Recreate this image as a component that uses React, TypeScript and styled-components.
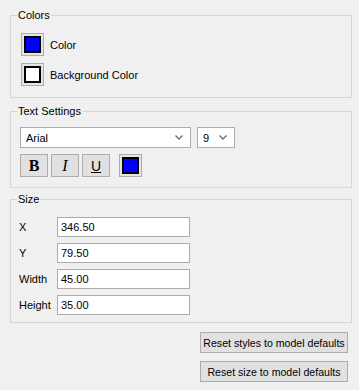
import { createGlobalStyle, styled } from "styled-components";

const GlobalStyle = createGlobalStyle`
  body {
    margin: 0;
    background: #f0f0f0;
    font-family: "Liberation Sans", Arial, sans-serif;
    font-size: 11px;
    color: #000;
  }
`;

const Chevron = () => (
  <svg width="8" height="5" viewBox="0 0 8 5">
    <path d="M0.5 0.5 L4 4 L7.5 0.5" fill="none" stroke="#6d6d6d" strokeWidth="1.4" />
  </svg>
);

const sizeFields = [
  ["X", "346.50"],
  ["Y", "79.50"],
  ["Width", "45.00"],
  ["Height", "35.00"],
];

const App = () => {
  return (
    <>
      <GlobalStyle />
      <Page>
        <Group $top={0}>
          <Legend>Colors</Legend>
          <ColorsBody>
            <SwatchRow>
              <Swatch $fill="#0000ff" />
              <span>Color</span>
            </SwatchRow>
            <SwatchRow>
              <Swatch $fill="#ffffff" />
              <span>Background Color</span>
            </SwatchRow>
          </ColorsBody>
        </Group>

        <Group $top={6}>
          <Legend>Text Settings</Legend>
          <TextBody>
            <SelectRow>
              <SelectBox $width={171}>
                <span>Arial</span>
                <Chevron />
              </SelectBox>
              <SelectBox $width={38}>
                <span>9</span>
                <Chevron />
              </SelectBox>
            </SelectRow>
            <StyleRow>
              <StyleButton $kind="bold">B</StyleButton>
              <StyleButton $kind="italic">I</StyleButton>
              <StyleButton $kind="underline">U</StyleButton>
              <TextSwatch $fill="#0000ff" />
            </StyleRow>
          </TextBody>
        </Group>

        <Group $top={4}>
          <Legend>Size</Legend>
          <SizeBody>
            {sizeFields.map(([label, value]) => (
              <FieldRow key={label}>
                <FieldLabel>{label}</FieldLabel>
                <Field>{value}</Field>
              </FieldRow>
            ))}
          </SizeBody>
        </Group>

        <Footer>
          <ResetButton>Reset styles to model defaults</ResetButton>
          <ResetButton>Reset size to model defaults</ResetButton>
        </Footer>
      </Page>
    </>
  );
};
export default App;

const Page = styled.div`
  width: 359px;
  box-sizing: border-box;
  padding: 8px 7px 0 10px;
  display: flex;
  flex-direction: column;
`;

const Group = styled.fieldset<{ $top: number }>`
  margin: ${(p) => p.$top}px 0 0 0;
  padding: 0;
  min-width: 0;
  border: 1px solid #d5d5d5;
`;

const Legend = styled.legend`
  margin-left: 6px;
  padding: 0 1px;
  line-height: 14px;
  font-size: 11px;
`;

const ColorsBody = styled.div`
  display: flex;
  flex-direction: column;
  gap: 7px;
  padding: 11px 10px 11px 10px;
`;

const SwatchRow = styled.div`
  display: flex;
  align-items: center;
  gap: 6px;
`;

const Swatch = styled.div<{ $fill: string }>`
  width: 23px;
  height: 23px;
  box-sizing: border-box;
  border: 1px solid #adadad;
  background: #e5e5e5;
  padding: 2px;
  flex-shrink: 0;

  &::after {
    content: "";
    display: block;
    width: 100%;
    height: 100%;
    box-sizing: border-box;
    border: 2px solid #000;
    background: ${(p) => p.$fill};
  }
`;

const TextSwatch = styled(Swatch)`
  margin-left: 6px;
`;

const TextBody = styled.div`
  display: flex;
  flex-direction: column;
  gap: 6px;
  padding: 9px 9px 10px 9px;
`;

const SelectRow = styled.div`
  display: flex;
  gap: 6px;
`;

const SelectBox = styled.div<{ $width: number }>`
  width: ${(p) => p.$width}px;
  height: 21px;
  box-sizing: border-box;
  border: 1px solid #acacac;
  background: #fff;
  display: flex;
  align-items: center;
  justify-content: space-between;
  padding: 0 7px 0 5px;
`;

const StyleRow = styled.div`
  display: flex;
  gap: 3px;
`;

const StyleButton = styled.div<{ $kind: "bold" | "italic" | "underline" }>`
  width: 28px;
  height: 23px;
  box-sizing: border-box;
  border: 1px solid #adadad;
  background: #e1e1e1;
  display: flex;
  align-items: center;
  justify-content: center;
  font-family: ${(p) =>
    p.$kind === "underline" ? '"Liberation Sans", Arial, sans-serif' : '"Liberation Serif", "Times New Roman", serif'};
  font-size: ${(p) => (p.$kind === "underline" ? "14px" : "16px")};
  font-weight: ${(p) => (p.$kind === "bold" ? 700 : 400)};
  font-style: ${(p) => (p.$kind === "italic" ? "italic" : "normal")};
  text-decoration: ${(p) => (p.$kind === "underline" ? "underline" : "none")};
`;

const SizeBody = styled.div`
  display: flex;
  flex-direction: column;
  gap: 6px;
  padding: 11px 8px 7px 8px;
`;

const FieldRow = styled.div`
  display: flex;
  align-items: center;
`;

const FieldLabel = styled.span`
  width: 38px;
`;

const Field = styled.div`
  width: 133px;
  height: 20px;
  box-sizing: border-box;
  border: 1px solid #acacac;
  background: #fff;
  display: flex;
  align-items: center;
  padding-left: 3px;
`;

const Footer = styled.div`
  display: flex;
  flex-direction: column;
  align-items: flex-end;
  gap: 8px;
  padding: 9px 4px 0 0;
`;

const ResetButton = styled.div`
  width: 148px;
  height: 21px;
  box-sizing: border-box;
  border: 1px solid #adadad;
  background: #e1e1e1;
  display: flex;
  align-items: center;
  justify-content: center;
  white-space: nowrap;
  font-size: 10.6px;
`;
